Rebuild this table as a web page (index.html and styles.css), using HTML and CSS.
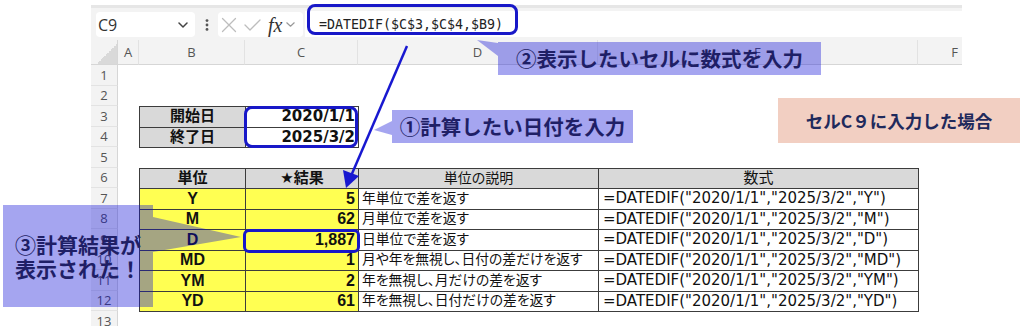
FILE: index.html
```html
<!DOCTYPE html>
<html lang="ja">
<head>
<meta charset="utf-8">
<title>DATEDIF</title>
<link rel="stylesheet" href="styles.css">
</head>
<body>
<div class="page">
  <div class="excel">
    <div class="fbar">
      <div class="namebox"><span class="nm">C9</span><svg class="chev" width="10" height="6" viewBox="0 0 10 6"><path d="M1 1 L5 5 L9 1"/></svg></div>
      <div class="dots"><svg width="4" height="12" viewBox="0 0 4 12"><circle cx="2" cy="1.6" r="1.4"/><circle cx="2" cy="6" r="1.4"/><circle cx="2" cy="10.4" r="1.4"/></svg></div>
      <div class="fxbox">
        <svg class="xic" width="16" height="16" viewBox="0 0 16 16"><path d="M1.5 1.5 L14.5 14.5 M14.5 1.5 L1.5 14.5"/></svg>
        <svg class="ck" width="17" height="12" viewBox="0 0 17 12"><path d="M1 6 L6 11 L16 1"/></svg>
        <span class="fx">fx</span>
        <svg class="chev2" width="9" height="5" viewBox="0 0 9 5"><path d="M0.8 0.8 L4.5 4.2 L8.2 0.8"/></svg>
      </div>
      <div class="finput"><span class="ftext">=DATEDIF($C$3,$C$4,$B9)</span></div>
    </div>
    <div class="sheet">
      <div class="corner"><span class="tri"></span></div>
      <div class="ch">A</div>
      <div class="ch">B</div>
      <div class="ch">C</div>
      <div class="ch">D</div>
      <div class="ch">E</div>
      <div class="ch">F</div>
      <div class="rh">1</div>
      <div class="rh">2</div>
      <div class="rh">3</div>
      <div class="rh">4</div>
      <div class="rh">5</div>
      <div class="rh">6</div>
      <div class="rh">7</div>
      <div class="rh">8</div>
      <div class="rh">9</div>
      <div class="rh">10</div>
      <div class="rh">11</div>
      <div class="rh">12</div>
      <div class="rh">13</div>
      <table class="t1">
        <colgroup><col class="cb"><col class="cc"></colgroup>
        <tr><td class="lab">開始日</td><td class="val">2020/1/1</td></tr>
        <tr><td class="lab">終了日</td><td class="val">2025/3/2</td></tr>
      </table>
      <table class="t2">
        <colgroup><col class="cb"><col class="cc"><col class="cd"><col class="ce"></colgroup>
        <tr class="hd"><td class="b">単位</td><td class="b">★結果</td><td class="hn">単位の説明</td><td>数式</td></tr>
        <tr><td class="u">Y</td><td class="n">5</td><td class="d">年単位で差を返す</td><td class="f">=DATEDIF("2020/1/1","2025/3/2","Y")</td></tr>
        <tr><td class="u">M</td><td class="n">62</td><td class="d">月単位で差を返す</td><td class="f">=DATEDIF("2020/1/1","2025/3/2","M")</td></tr>
        <tr><td class="u">D</td><td class="n">1,887</td><td class="d">日単位で差を返す</td><td class="f">=DATEDIF("2020/1/1","2025/3/2","D")</td></tr>
        <tr><td class="u">MD</td><td class="n">1</td><td class="d">月や年を無視し、日付の差だけを返す</td><td class="f">=DATEDIF("2020/1/1","2025/3/2","MD")</td></tr>
        <tr><td class="u">YM</td><td class="n">2</td><td class="d">年を無視し、月だけの差を返す</td><td class="f">=DATEDIF("2020/1/1","2025/3/2","YM")</td></tr>
        <tr><td class="u">YD</td><td class="n">61</td><td class="d">年を無視し、日付だけの差を返す</td><td class="f">=DATEDIF("2020/1/1","2025/3/2","YD")</td></tr>
      </table>
    </div>
  </div>

  <div class="hl hl-f"></div>
  <div class="hl hl-d"></div>
  <div class="hl hl-r"></div>

  <svg class="ov" width="1024" height="326" viewBox="0 0 1024 326">
    <polygon class="tail" points="477,40 498,43 498,56"/>
    <polygon class="tail" points="374,130 392,121 392,135"/>
    <polygon class="tail" points="153,217 241,237 153,252"/>
    <line class="arw" x1="407" y1="46" x2="351" y2="176"/>
    <polygon class="arh" points="346,188 343,170 359,176"/>
  </svg>

  <div class="co co2">②表示したいセルに数式を入力</div>
  <div class="co co1">①計算したい日付を入力</div>
  <div class="co co3">③計算結果が<br>表示された！</div>
  <div class="note">セルC９に入力した場合</div>
</div>
</body>
</html>
```

FILE: styles.css
```css
* { box-sizing: border-box; }
html, body { margin: 0; padding: 0; background: #fff; }
body {
  width: 1024px;
  height: 326px;
  overflow: hidden;
  font-family: "DejaVu Sans", "Noto Sans CJK JP", sans-serif;
}
.page {
  position: relative;
  width: 1024px;
  height: 326px;
  padding-top: 5px;
  overflow: hidden;
}
.excel {
  margin-left: 91px;
  width: 871px;
  overflow: hidden;
}

/* formula bar */
.fbar {
  display: flex;
  align-items: flex-start;
  height: 35px;
  padding: 4px 0 0 5px;
  background: #f3f3f3;
  border-top: 3px solid #e6e6e6;
}
.namebox {
  width: 99px;
  height: 25px;
  background: #fff;
  border-radius: 4px;
  display: flex;
  align-items: center;
  justify-content: space-between;
  padding: 0 7px 0 2px;
  font-family: "Open Sans", "Noto Sans", sans-serif;
  font-size: 16px;
  color: #333;
}
.chev path, .chev2 path { fill: none; stroke-width: 1.5; stroke-linecap: round; stroke-linejoin: round; }
.chev path { stroke: #444; }
.chev2 path { stroke: #999; stroke-width: 1.2; }
.dots {
  width: 23px;
  height: 25px;
  display: flex;
  align-items: center;
  justify-content: center;
}
.dots circle { fill: #555; }
.fxbox {
  width: 85px;
  height: 25px;
  background: #fff;
  border-radius: 4px;
  display: flex;
  align-items: center;
  padding-left: 3px;
}
.xic path, .ck path { fill: none; stroke: #bdbdbd; stroke-width: 1.3; stroke-linecap: round; stroke-linejoin: round; }
.xic { margin-right: 7px; }
.ck { margin-right: 7px; }
.fx {
  font-family: "Liberation Serif", serif;
  font-style: italic;
  font-size: 20px;
  color: #333;
  margin-right: 4px;
  line-height: 1;
}
.finput {
  flex: 1;
  height: 26px;
  margin-top: -1px;
  margin-left: 2px;
  background: #fff;
  display: flex;
  align-items: center;
  padding-left: 14px;
}
.ftext {
  font-family: "DejaVu Sans Mono", monospace;
  font-size: 13.3px;
  color: #222;
}

/* sheet grid */
.sheet {
  display: grid;
  grid-template-columns: 27px 21px 106px 113px 240px 320px 74px;
  grid-template-rows: 25px repeat(13, 20.5px);
  height: 286px;
  background: #fff;
}
.corner {
  background: #f3f3f3;
  border-bottom: 1px solid #d6d6d6;
  border-right: 1px solid #d6d6d6;
  display: flex;
  align-items: flex-end;
  justify-content: flex-end;
}
.tri {
  width: 20px;
  height: 20px;
  background: linear-gradient(to bottom right, transparent 50%, #d9d9d9 50%);
}
.ch {
  background: #f3f3f3;
  border-bottom: 1px solid #d6d6d6;
  border-right: 1px solid #e2e2e2;
  display: flex;
  align-items: center;
  justify-content: center;
  font-family: "Open Sans", "Noto Sans", sans-serif;
  font-size: 13px;
  color: #555;
}
.rh {
  grid-column: 1;
  background: #f3f3f3;
  border-bottom: 1px solid #e3e3e3;
  border-right: 1px solid #d6d6d6;
  display: flex;
  align-items: center;
  justify-content: center;
  font-family: "Open Sans", "Noto Sans", sans-serif;
  font-size: 13px;
  color: #555;
}

/* tables */
table {
  border-collapse: collapse;
  table-layout: fixed;
  width: 100%;
}
td {
  border: 1px solid #3c3c3c;
  padding: 0 3px;
  height: 20.5px;
  font-size: 15px;
  line-height: 1;
  white-space: nowrap;
  overflow: hidden;
  color: #111;
  font-feature-settings: "palt";
}
col.cb { width: 106px; }
col.cc { width: 113px; }
col.cd { width: 240px; }
col.ce { width: 320px; }
.t1 { grid-column: 3 / 5; grid-row: 4 / 6; height: 41px; }
.t2 { grid-column: 3 / 7; grid-row: 7 / 14; height: 143.5px; }
.lab { background: #d9d9d9; font-weight: bold; text-align: center; }
.val { font-weight: bold; text-align: right; }
.hd td { background: #d9d9d9; text-align: center; }
.hd td.b { font-weight: bold; }
.hd td.hn { font-size: 14px; }
.u {
  background: #ffff52;
  font-family: "Liberation Sans", "Noto Sans CJK JP", sans-serif;
  font-weight: bold;
  font-size: 16px;
  text-align: center;
}
.n {
  background: #ffff52;
  font-family: "Liberation Sans", sans-serif;
  font-weight: bold;
  font-size: 16px;
  text-align: right;
}
.d { text-align: left; font-size: 13.8px; }
.f { text-align: left; padding-left: 4px; }

/* overlays */
.hl {
  position: absolute;
  border: 3px solid #1818c8;
  border-radius: 8px;
}
.hl-f { left: 307px; top: 4px; width: 211px; height: 31px; }
.hl-d { left: 244px; top: 106px; width: 114px; height: 42px; }
.hl-r { left: 243px; top: 229px; width: 117px; height: 24px; border-radius: 6px; }

.ov {
  position: absolute;
  left: 0;
  top: 0;
}
.tail { fill: rgba(12, 12, 215, 0.37); }
.arw { stroke: #1818d0; stroke-width: 2.5; }
.arh { fill: #1818d0; }

.co {
  position: absolute;
  background: rgba(12, 12, 215, 0.37);
  color: #1f1f66;
  font-family: "Noto Sans CJK JP", sans-serif;
  font-weight: bold;
  font-size: 20.5px;
  line-height: 1;
  display: flex;
  align-items: center;
}
.co2 { left: 498px; top: 42px; width: 323px; height: 33px; padding-left: 18px; }
.co1 { left: 392px; top: 110px; width: 241px; height: 33px; justify-content: center; }
.co3 {
  left: 3px;
  top: 205px;
  width: 150px;
  height: 102px;
  padding-left: 12px;
  line-height: 24px;
  font-size: 21px;
}
.note {
  position: absolute;
  left: 778px;
  top: 98px;
  width: 242px;
  height: 45px;
  background: #f2cfc2;
  color: #1f2a5c;
  font-family: "Noto Sans CJK JP", sans-serif;
  font-weight: bold;
  font-size: 17.5px;
  display: flex;
  align-items: center;
  justify-content: center;
}
```
